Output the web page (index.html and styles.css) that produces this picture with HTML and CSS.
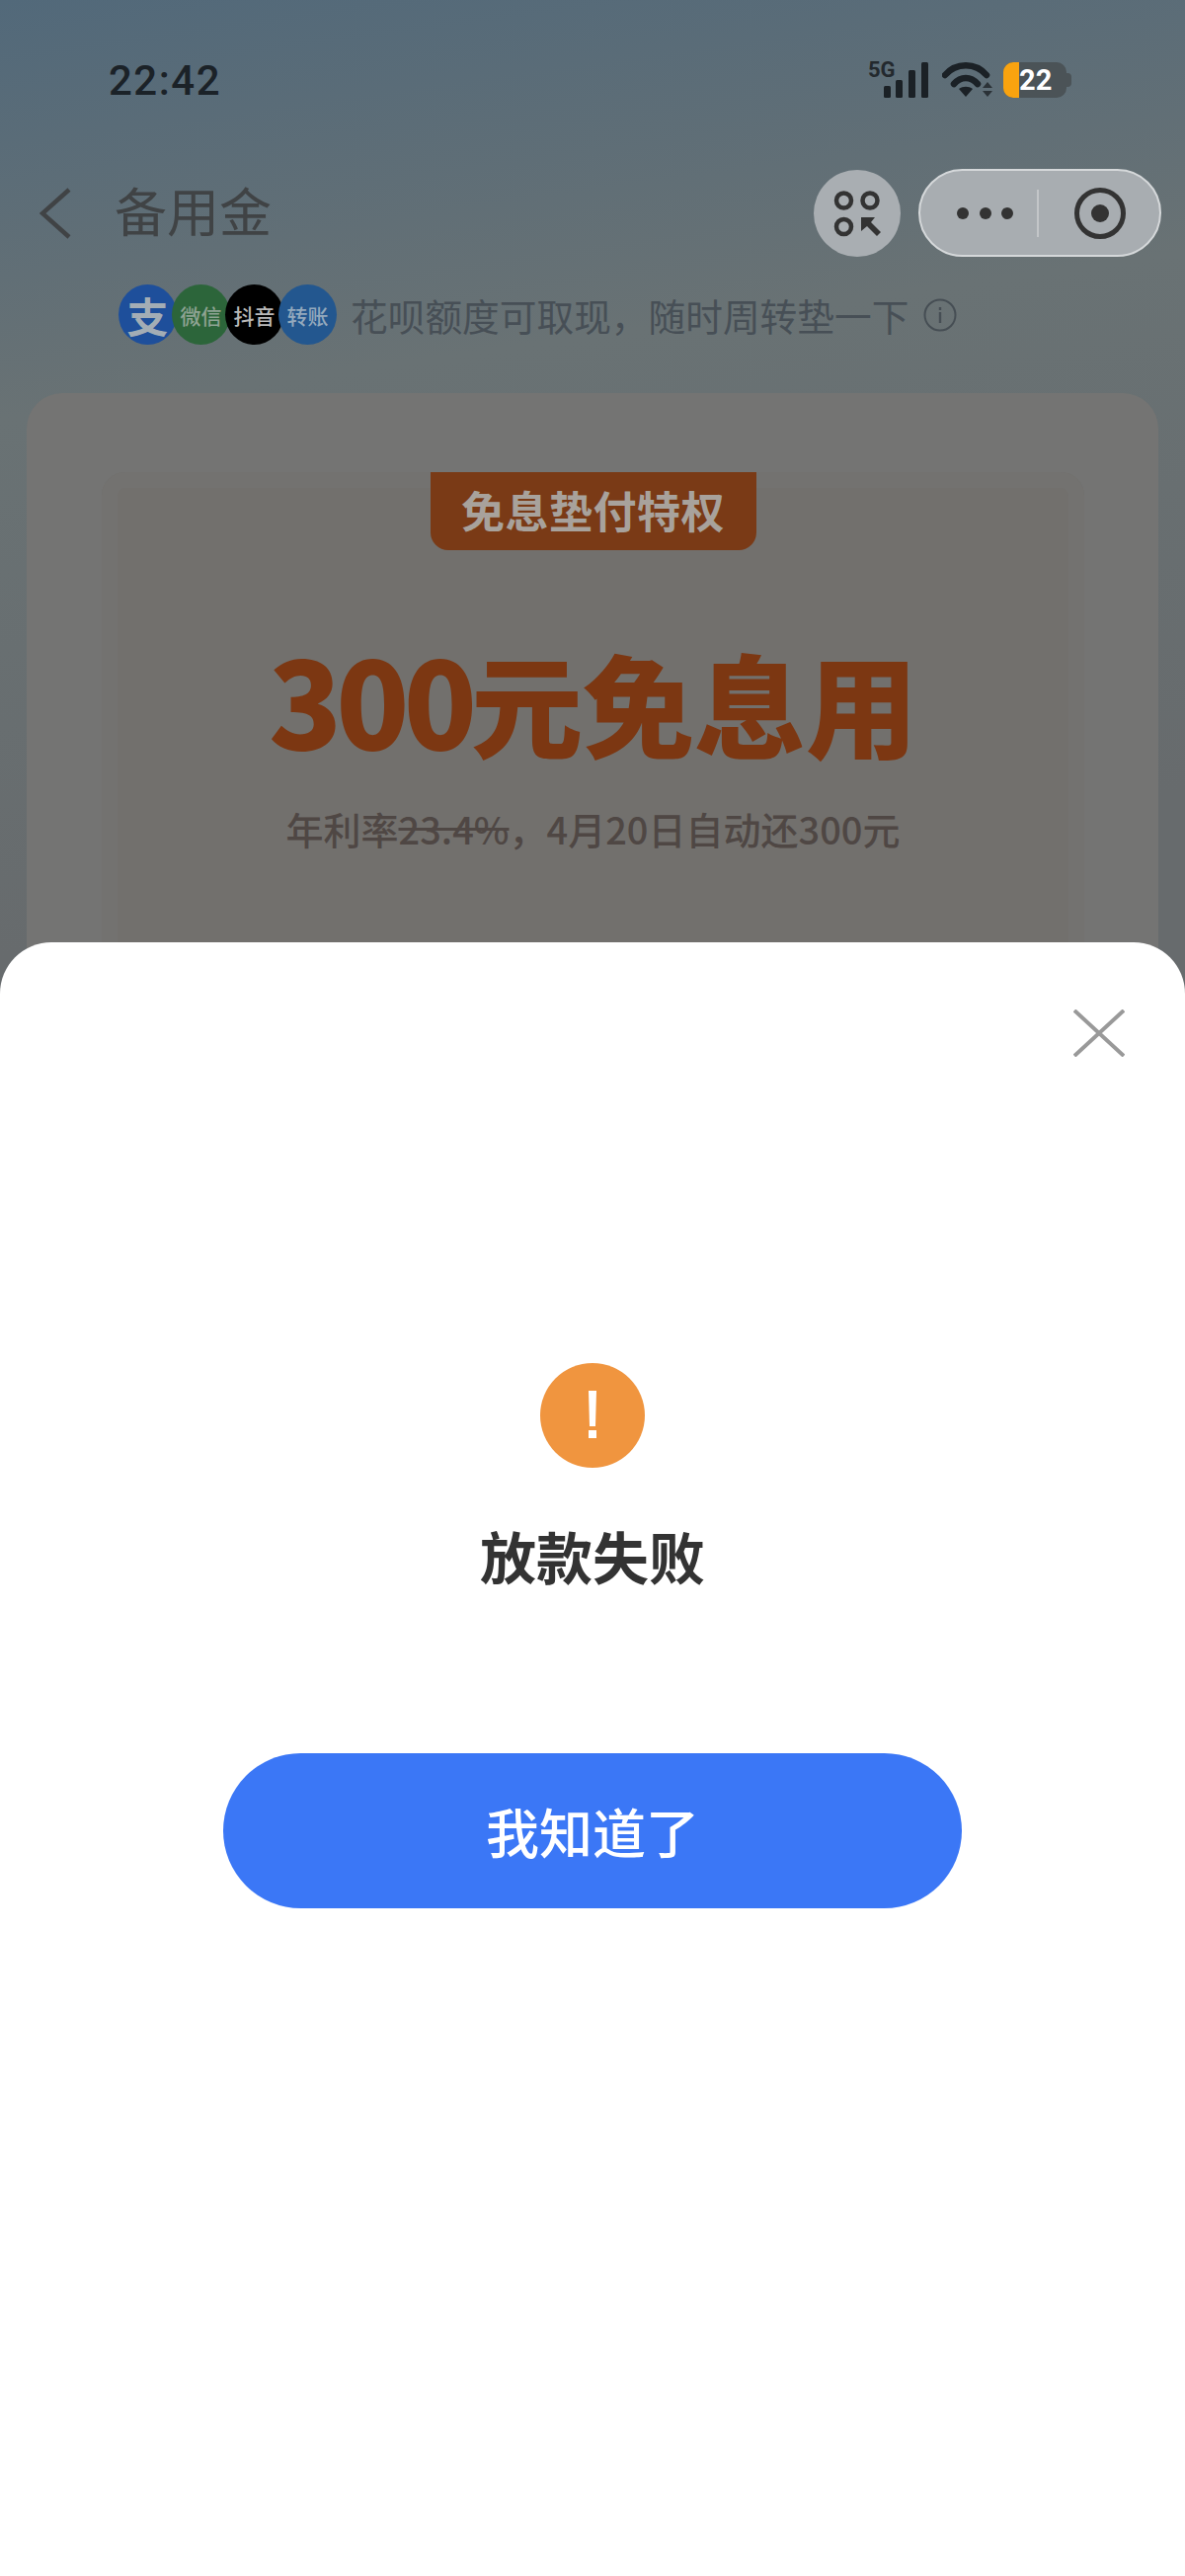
FILE: index.html
```html
<!DOCTYPE html>
<html lang="zh-CN">
<head>
  <meta charset="UTF-8" />
  <title>备用金</title>
  <link rel="stylesheet" href="styles.css">
</head>
<body>
  <div class="page">

    <!-- Status bar -->
    <div class="status-bar">
      <span class="clock">22:42</span>
      <div class="status-icons">
        <svg class="signal" width="62" height="48" viewBox="0 0 62 48">
          <text x="0" y="22" class="signal-label">5G</text>
          <rect x="16" y="31" width="7" height="12" rx="1.5" />
          <rect x="28" y="25" width="7" height="18" rx="1.5" />
          <rect x="41" y="15" width="7" height="28" rx="1.5" />
          <rect x="54" y="7" width="7" height="36" rx="1.5" />
        </svg>
        <svg class="wifi" width="52" height="38" viewBox="0 0 52 38">
          <path d="M3 14 C14 1 34 1 45 14" fill="none" stroke="#1b2126" stroke-width="6.500" stroke-linecap="round" />
          <path d="M12 23 C19 15 29 15 36 23" fill="none" stroke="#1b2126" stroke-width="6.500" stroke-linecap="round" />
          <path d="M17 28 C21 25 27 25 31 28 L24 36 Z" fill="#1b2126" />
          <path d="M46 21 L51 27 H41 Z M41 30 H51 L46 36 Z" fill="#2b3237" />
        </svg>
        <div class="battery">
          <div class="battery-level"></div>
          <span class="battery-text">22</span>
          <div class="battery-cap"></div>
        </div>
      </div>
    </div>

    <!-- Title bar -->
    <div class="nav">
      <svg class="back" width="32" height="52" viewBox="0 0 32 52">
        <path d="M30 2 L3 26 L30 50" fill="none" stroke="#404345" stroke-width="4.500" />
      </svg>
      <h1 class="nav-title">备用金</h1>
      <div class="round-btn">
        <svg width="60" height="60" viewBox="0 0 60 60">
          <circle cx="16.5" cy="17" r="7.5" fill="none" stroke="#333" stroke-width="4.5" />
          <circle cx="43" cy="17" r="7.5" fill="none" stroke="#333" stroke-width="4.5" />
          <circle cx="16.5" cy="43.5" r="7.5" fill="none" stroke="#333" stroke-width="4.5" />
          <path d="M34 34 H48 L44 39 L54 49 L50 53 L40 43 L34 48 Z" fill="#333" />
        </svg>
      </div>
      <div class="capsule">
        <div class="capsule-dots"><i></i><i></i><i></i></div>
        <div class="capsule-line"></div>
        <svg width="56" height="56" viewBox="0 0 56 56">
          <circle cx="28" cy="28" r="23.5" fill="none" stroke="#333" stroke-width="5" />
          <circle cx="28" cy="28" r="9" fill="#333" />
        </svg>
      </div>
    </div>

    <!-- Promo line -->
    <div class="promo">
      <div class="badges">
        <span class="badge badge-ali">支</span>
        <span class="badge badge-wx">微信</span>
        <span class="badge badge-dy">抖音</span>
        <span class="badge badge-zz">转账</span>
      </div>
      <span class="promo-text">花呗额度可取现，随时周转垫一下</span>
      <svg class="info" width="34" height="34" viewBox="0 0 34 34">
        <circle cx="17" cy="17" r="15.5" fill="none" stroke="#464e54" stroke-width="2" />
        <rect x="15.8" y="14" width="2.4" height="11" fill="#464e54" />
        <rect x="15.8" y="9" width="2.4" height="3" fill="#464e54" />
      </svg>
    </div>

    <!-- Card behind the sheet -->
    <div class="card">
      <div class="card-inner">
        <div class="tag">免息垫付特权</div>
        <div class="amount"><span class="amount-num">300</span>元免息用</div>
        <div class="terms">年利率<s>23.4%</s>，4月20日自动还300元</div>
      </div>
    </div>

    <!-- Bottom sheet -->
    <div class="sheet">
      <svg class="close" width="52" height="48" viewBox="0 0 52 48">
        <path d="M1 1 L51 47 M51 1 L1 47" fill="none" stroke="#999" stroke-width="4" />
      </svg>
      <svg class="warn" width="106" height="106" viewBox="0 0 106 106">
        <circle cx="53" cy="53" r="53" fill="#f0953f" />
        <path d="M49 28 H57 L56 64 H50 Z" fill="#fff" />
        <rect x="49" y="68" width="8" height="8" fill="#fff" />
      </svg>
      <div class="sheet-title">放款失败</div>
      <button class="ok-btn">我知道了</button>
    </div>

  </div>
</body>
</html>
```

FILE: styles.css
```css
* {
  box-sizing: border-box;
}

body {
  margin: 0;
  font-family: "Noto Sans CJK SC", "Noto Sans", sans-serif;
}

.page {
  position: relative;
  width: 1200px;
  height: 2608px;
  overflow: hidden;
  background: linear-gradient(172deg, #52697a 0, #697274 420px, #676b6d 960px);
}

/* Status bar */
.status-bar {
  height: 171px;
  padding: 60px 120px 0 110px;
  display: flex;
  justify-content: space-between;
  align-items: flex-start;
}

.clock {
  font-family: Roboto, sans-serif;
  font-size: 42px;
  font-weight: 500;
  line-height: 44px;
  letter-spacing: 1.5px;
  color: #1b2228;
}

.status-icons {
  display: flex;
  align-items: flex-start;
}

.signal {
  margin-top: -4px;
  fill: #1b2126;
}

.signal-label {
  font-family: Roboto, sans-serif;
  font-size: 22px;
  font-weight: 700;
  fill: #23292e;
}

.wifi {
  margin: 2px 10px 0 13px;
}

.battery {
  position: relative;
  width: 64px;
  height: 36px;
  margin-top: 3px;
  background: #4b5357;
  border-radius: 10px;
  display: flex;
}

.battery-level {
  width: 16px;
  background: #f9a30f;
  border-radius: 10px 0 0 10px;
}

.battery-text {
  font-family: Roboto, sans-serif;
  font-size: 29px;
  font-weight: 700;
  line-height: 36px;
  color: #fff;
}

.battery-cap {
  position: absolute;
  right: -5px;
  top: 11px;
  width: 5px;
  height: 14px;
  background: #4b5357;
  border-radius: 0 4px 4px 0;
}

/* Title bar */
.nav {
  height: 89px;
  padding: 0 24px 0 40px;
  display: flex;
  align-items: center;
}

.back {
  flex: none;
}

.nav-title {
  margin: 0 0 8px 44px;
  flex: 1;
  font-size: 53px;
  font-weight: 400;
  color: #404345;
}

.round-btn {
  width: 88px;
  height: 88px;
  margin-right: 18px;
  border-radius: 50%;
  background: #a9aeb2;
  display: flex;
  align-items: center;
  justify-content: center;
}

.capsule {
  width: 246px;
  height: 89px;
  padding-left: 37px;
  border: 2px solid #d5d8da;
  border-radius: 45px;
  background: #a8adb1;
  display: flex;
  align-items: center;
}

.capsule-dots {
  display: flex;
  gap: 10.500px;
}

.capsule-dots i {
  width: 12px;
  height: 12px;
  border-radius: 50%;
  background: #333;
}

.capsule-line {
  width: 2px;
  height: 48px;
  margin: 0 34px 0 24px;
  background: #c3c6c8;
}

/* Promo line */
.promo {
  height: 61px;
  margin-top: 28px;
  padding-left: 120px;
  display: flex;
  align-items: center;
}

.badges {
  display: flex;
}

.badge {
  width: 59px;
  height: 61px;
  margin-right: -5px;
  border-radius: 50%;
  display: flex;
  align-items: center;
  justify-content: center;
  font-size: 21px;
  font-weight: 500;
  white-space: nowrap;
}

.badge-ali {
  background: #1e4f9b;
  color: #a3adb5;
  font-size: 42px;
  font-weight: 700;
}

.badge-wx {
  background: #2c653a;
  color: #8ea393;
}

.badge-dy {
  background: #000;
  color: #b8b8b8;
}

.badge-zz {
  background: #23578f;
  color: #94a9bd;
}

.promo-text {
  margin-left: 19px;
  font-size: 37.700px;
  color: #474f56;
  white-space: nowrap;
}

.info {
  margin-left: 15px;
}

/* Card */
.card {
  height: 900px;
  margin: 49px 27px 0;
  padding: 80px 75px 0 76px;
  background: #747473;
  border-radius: 36px;
}

.card-inner {
  height: 100%;
  background: #72706d;
  box-shadow: inset 0 0 0 16px #737270;
  border-radius: 24px 24px 0 0;
  display: flex;
  flex-direction: column;
  align-items: center;
}

.tag {
  width: 330px;
  height: 79px;
  background: #7a3a16;
  color: #a8a29c;
  border-radius: 0 0 18px 18px;
  font-size: 44px;
  font-weight: 700;
  line-height: 76px;
  letter-spacing: 0.5px;
  text-align: center;
}

.amount {
  margin-top: 84px;
  font-size: 113px;
  font-weight: 900;
  line-height: 130px;
  color: #7c3712;
  white-space: nowrap;
}

.amount-num {
  font-size: 122px;
  letter-spacing: -6px;
}

.terms {
  margin-top: 38px;
  font-size: 38px;
  font-weight: 500;
  line-height: 52px;
  color: #4f4744;
  white-space: nowrap;
}

/* Bottom sheet */
.sheet {
  position: absolute;
  left: 0;
  right: 0;
  bottom: 0;
  height: 1654px;
  padding-top: 426px;
  background: #fff;
  border-radius: 52px 52px 0 0;
  display: flex;
  flex-direction: column;
  align-items: center;
}

.close {
  position: absolute;
  top: 68px;
  right: 61px;
}

.sheet-title {
  margin-top: 47px;
  font-size: 57px;
  font-weight: 700;
  line-height: 82px;
  color: #333;
}

.ok-btn {
  width: 748px;
  height: 157px;
  margin-top: 160px;
  border: none;
  border-radius: 79px;
  background: #3b77f6;
  color: #fff;
  font-family: inherit;
  font-size: 54px;
  font-weight: 500;
}
```
